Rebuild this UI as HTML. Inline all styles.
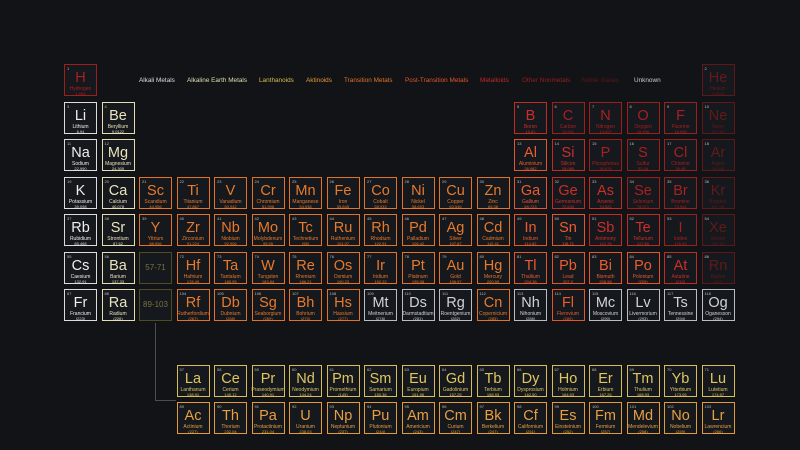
<!DOCTYPE html>
<html><head><meta charset="utf-8"><style>
html,body{margin:0;padding:0;background:#111317;width:800px;height:450px;overflow:hidden;font-family:"Liberation Sans",sans-serif}
.c{position:absolute;width:31px;height:30px;border:1.5px solid;background:#15181d;text-align:center;line-height:1}
.c i{position:absolute;left:2px;top:2px;font-style:normal;font-size:4px;color:#bbb}
.c b{position:absolute;left:0;right:0;top:6px;font-weight:normal;font-size:14.5px}
.c em{position:absolute;left:-2px;right:-2px;top:22px;font-style:normal;font-size:5px;white-space:nowrap}
.c small{position:absolute;left:0;right:0;top:27px;font-size:4px}
.a{border-color:#dcdcdc;color:#eee}.a small{color:#ddd}
.e{border-color:#e4ddb4;color:#ebe3bd}
.l{border-color:#d8bd55;color:#e0c660}
.x{border-color:#e29a35;color:#e8a040}
.t{border-color:#e07328;color:#e87a2c}
.p{border-color:#e5552a;color:#ec5c2e}
.m{border-color:#c22a24;color:#cc2e28}
.n{border-color:#9e1d1d;color:#a82020}
.g{border-color:#5e1818;color:#621a1a}
.u{border-color:#b8bcc4;color:#d0d2d8}
.ph{border-color:#4e4c24;color:#77723a}
.ph b{font-size:8px;top:11px}
.k1{left:64px}.k2{left:101.5px}.k3{left:139px}.k4{left:176.5px}.k5{left:214px}.k6{left:251.5px}.k7{left:289px}.k8{left:326.5px}.k9{left:364px}.k10{left:401.5px}.k11{left:439px}.k12{left:476.5px}.k13{left:514px}.k14{left:551.5px}.k15{left:589px}.k16{left:626.5px}.k17{left:664px}.k18{left:701.5px}
.r1{top:64px}.r2{top:101.5px}.r3{top:139px}.r4{top:176.5px}.r5{top:214px}.r6{top:251.5px}.r7{top:289px}.r8{top:364.5px}.r9{top:402px}
.lg{position:absolute;top:77px;font-size:6.4px;white-space:nowrap}
.ln{position:absolute;background:#4a4d52}
</style></head><body>
<span class="lg" style="left:139px;color:#ddd">Alkali Metals</span>
<span class="lg" style="left:187px;color:#e4ddb4">Alkaline Earth Metals</span>
<span class="lg" style="left:259px;color:#d8bd55">Lanthanoids</span>
<span class="lg" style="left:306px;color:#e29a35">Aktinoids</span>
<span class="lg" style="left:344px;color:#e07328">Transition Metals</span>
<span class="lg" style="left:405px;color:#e5552a">Post-Transition Metals</span>
<span class="lg" style="left:480px;color:#c22a24">Metalloids</span>
<span class="lg" style="left:522px;color:#9e1d1d">Other Nonmetals</span>
<span class="lg" style="left:582px;color:#5e1818">Noble Gases</span>
<span class="lg" style="left:634px;color:#ccc">Unknown</span>
<div class="ln" style="left:155px;top:323px;width:1px;height:78px"></div>
<div class="ln" style="left:155px;top:400px;width:21px;height:1px"></div>

<div class="c n k1 r1"><i>1</i><b>H</b><em>Hydrogen</em><small>1.008</small></div>
<div class="c g k18 r1"><i>2</i><b>He</b><em>Helium</em><small>4.0026</small></div>

<div class="c a k1 r2"><i>3</i><b>Li</b><em>Lithium</em><small>6.94</small></div>
<div class="c e k2 r2"><i>4</i><b>Be</b><em>Beryllium</em><small>9.0122</small></div>
<div class="c m k13 r2"><i>5</i><b>B</b><em>Boron</em><small>10.81</small></div>
<div class="c n k14 r2"><i>6</i><b>C</b><em>Carbon</em><small>12.011</small></div>
<div class="c n k15 r2"><i>7</i><b>N</b><em>Nitrogen</em><small>14.007</small></div>
<div class="c n k16 r2"><i>8</i><b>O</b><em>Oxygen</em><small>15.999</small></div>
<div class="c n k17 r2"><i>9</i><b>F</b><em>Fluorine</em><small>18.998</small></div>
<div class="c g k18 r2"><i>10</i><b>Ne</b><em>Neon</em><small>20.180</small></div>

<div class="c a k1 r3"><i>11</i><b>Na</b><em>Sodium</em><small>22.990</small></div>
<div class="c e k2 r3"><i>12</i><b>Mg</b><em>Magnesium</em><small>24.305</small></div>
<div class="c p k13 r3"><i>13</i><b>Al</b><em>Aluminium</em><small>26.982</small></div>
<div class="c m k14 r3"><i>14</i><b>Si</b><em>Silicon</em><small>28.085</small></div>
<div class="c n k15 r3"><i>15</i><b>P</b><em>Phosphorus</em><small>30.974</small></div>
<div class="c n k16 r3"><i>16</i><b>S</b><em>Sulfur</em><small>32.06</small></div>
<div class="c n k17 r3"><i>17</i><b>Cl</b><em>Chlorine</em><small>35.45</small></div>
<div class="c g k18 r3"><i>18</i><b>Ar</b><em>Argon</em><small>39.948</small></div>

<div class="c a k1 r4"><i>19</i><b>K</b><em>Potassium</em><small>39.098</small></div>
<div class="c e k2 r4"><i>20</i><b>Ca</b><em>Calcium</em><small>40.078</small></div>
<div class="c t k3 r4"><i>21</i><b>Sc</b><em>Scandium</em><small>44.956</small></div>
<div class="c t k4 r4"><i>22</i><b>Ti</b><em>Titanium</em><small>47.867</small></div>
<div class="c t k5 r4"><i>23</i><b>V</b><em>Vanadium</em><small>50.942</small></div>
<div class="c t k6 r4"><i>24</i><b>Cr</b><em>Chromium</em><small>51.996</small></div>
<div class="c t k7 r4"><i>25</i><b>Mn</b><em>Manganese</em><small>54.938</small></div>
<div class="c t k8 r4"><i>26</i><b>Fe</b><em>Iron</em><small>55.845</small></div>
<div class="c t k9 r4"><i>27</i><b>Co</b><em>Cobalt</em><small>58.933</small></div>
<div class="c t k10 r4"><i>28</i><b>Ni</b><em>Nickel</em><small>58.693</small></div>
<div class="c t k11 r4"><i>29</i><b>Cu</b><em>Copper</em><small>63.546</small></div>
<div class="c t k12 r4"><i>30</i><b>Zn</b><em>Zinc</em><small>65.38</small></div>
<div class="c p k13 r4"><i>31</i><b>Ga</b><em>Gallium</em><small>69.723</small></div>
<div class="c m k14 r4"><i>32</i><b>Ge</b><em>Germanium</em><small>72.630</small></div>
<div class="c m k15 r4"><i>33</i><b>As</b><em>Arsenic</em><small>74.922</small></div>
<div class="c n k16 r4"><i>34</i><b>Se</b><em>Selenium</em><small>78.971</small></div>
<div class="c n k17 r4"><i>35</i><b>Br</b><em>Bromine</em><small>79.904</small></div>
<div class="c g k18 r4"><i>36</i><b>Kr</b><em>Krypton</em><small>83.798</small></div>

<div class="c a k1 r5"><i>37</i><b>Rb</b><em>Rubidium</em><small>85.468</small></div>
<div class="c e k2 r5"><i>38</i><b>Sr</b><em>Strontium</em><small>87.62</small></div>
<div class="c t k3 r5"><i>39</i><b>Y</b><em>Yttrium</em><small>88.906</small></div>
<div class="c t k4 r5"><i>40</i><b>Zr</b><em>Zirconium</em><small>91.224</small></div>
<div class="c t k5 r5"><i>41</i><b>Nb</b><em>Niobium</em><small>92.906</small></div>
<div class="c t k6 r5"><i>42</i><b>Mo</b><em>Molybdenum</em><small>95.95</small></div>
<div class="c t k7 r5"><i>43</i><b>Tc</b><em>Technetium</em><small>(98)</small></div>
<div class="c t k8 r5"><i>44</i><b>Ru</b><em>Ruthenium</em><small>101.07</small></div>
<div class="c t k9 r5"><i>45</i><b>Rh</b><em>Rhodium</em><small>102.91</small></div>
<div class="c t k10 r5"><i>46</i><b>Pd</b><em>Palladium</em><small>106.42</small></div>
<div class="c t k11 r5"><i>47</i><b>Ag</b><em>Silver</em><small>107.87</small></div>
<div class="c t k12 r5"><i>48</i><b>Cd</b><em>Cadmium</em><small>112.41</small></div>
<div class="c p k13 r5"><i>49</i><b>In</b><em>Indium</em><small>114.82</small></div>
<div class="c p k14 r5"><i>50</i><b>Sn</b><em>Tin</em><small>118.71</small></div>
<div class="c m k15 r5"><i>51</i><b>Sb</b><em>Antimony</em><small>121.76</small></div>
<div class="c m k16 r5"><i>52</i><b>Te</b><em>Tellurium</em><small>127.60</small></div>
<div class="c n k17 r5"><i>53</i><b>I</b><em>Iodine</em><small>126.90</small></div>
<div class="c g k18 r5"><i>54</i><b>Xe</b><em>Xenon</em><small>131.29</small></div>

<div class="c a k1 r6"><i>55</i><b>Cs</b><em>Caesium</em><small>132.91</small></div>
<div class="c e k2 r6"><i>56</i><b>Ba</b><em>Barium</em><small>137.33</small></div>
<div class="c ph k3 r6"><b>57-71</b></div>
<div class="c t k4 r6"><i>72</i><b>Hf</b><em>Hafnium</em><small>178.49</small></div>
<div class="c t k5 r6"><i>73</i><b>Ta</b><em>Tantalum</em><small>180.95</small></div>
<div class="c t k6 r6"><i>74</i><b>W</b><em>Tungsten</em><small>183.84</small></div>
<div class="c t k7 r6"><i>75</i><b>Re</b><em>Rhenium</em><small>186.21</small></div>
<div class="c t k8 r6"><i>76</i><b>Os</b><em>Osmium</em><small>190.23</small></div>
<div class="c t k9 r6"><i>77</i><b>Ir</b><em>Iridium</em><small>192.22</small></div>
<div class="c t k10 r6"><i>78</i><b>Pt</b><em>Platinum</em><small>195.08</small></div>
<div class="c t k11 r6"><i>79</i><b>Au</b><em>Gold</em><small>196.97</small></div>
<div class="c t k12 r6"><i>80</i><b>Hg</b><em>Mercury</em><small>200.59</small></div>
<div class="c p k13 r6"><i>81</i><b>Tl</b><em>Thallium</em><small>204.38</small></div>
<div class="c p k14 r6"><i>82</i><b>Pb</b><em>Lead</em><small>207.2</small></div>
<div class="c p k15 r6"><i>83</i><b>Bi</b><em>Bismuth</em><small>208.98</small></div>
<div class="c p k16 r6"><i>84</i><b>Po</b><em>Polonium</em><small>(209)</small></div>
<div class="c m k17 r6"><i>85</i><b>At</b><em>Astatine</em><small>(210)</small></div>
<div class="c g k18 r6"><i>86</i><b>Rn</b><em>Radon</em><small>(222)</small></div>

<div class="c a k1 r7"><i>87</i><b>Fr</b><em>Francium</em><small>(223)</small></div>
<div class="c e k2 r7"><i>88</i><b>Ra</b><em>Radium</em><small>(226)</small></div>
<div class="c ph k3 r7"><b>89-103</b></div>
<div class="c t k4 r7"><i>104</i><b>Rf</b><em>Rutherfordium</em><small>(267)</small></div>
<div class="c t k5 r7"><i>105</i><b>Db</b><em>Dubnium</em><small>(268)</small></div>
<div class="c t k6 r7"><i>106</i><b>Sg</b><em>Seaborgium</em><small>(269)</small></div>
<div class="c t k7 r7"><i>107</i><b>Bh</b><em>Bohrium</em><small>(270)</small></div>
<div class="c t k8 r7"><i>108</i><b>Hs</b><em>Hassium</em><small>(277)</small></div>
<div class="c u k9 r7"><i>109</i><b>Mt</b><em>Meitnerium</em><small>(278)</small></div>
<div class="c u k10 r7"><i>110</i><b>Ds</b><em>Darmstadtium</em><small>(281)</small></div>
<div class="c u k11 r7"><i>111</i><b>Rg</b><em>Roentgenium</em><small>(282)</small></div>
<div class="c t k12 r7"><i>112</i><b>Cn</b><em>Copernicium</em><small>(285)</small></div>
<div class="c u k13 r7"><i>113</i><b>Nh</b><em>Nihonium</em><small>(286)</small></div>
<div class="c p k14 r7"><i>114</i><b>Fl</b><em>Flerovium</em><small>(289)</small></div>
<div class="c u k15 r7"><i>115</i><b>Mc</b><em>Moscovium</em><small>(290)</small></div>
<div class="c u k16 r7"><i>116</i><b>Lv</b><em>Livermorium</em><small>(293)</small></div>
<div class="c u k17 r7"><i>117</i><b>Ts</b><em>Tennessine</em><small>(294)</small></div>
<div class="c u k18 r7"><i>118</i><b>Og</b><em>Oganesson</em><small>(294)</small></div>

<div class="c l k4 r8"><i>57</i><b>La</b><em>Lanthanum</em><small>138.91</small></div>
<div class="c l k5 r8"><i>58</i><b>Ce</b><em>Cerium</em><small>140.12</small></div>
<div class="c l k6 r8"><i>59</i><b>Pr</b><em>Praseodymium</em><small>140.91</small></div>
<div class="c l k7 r8"><i>60</i><b>Nd</b><em>Neodymium</em><small>144.24</small></div>
<div class="c l k8 r8"><i>61</i><b>Pm</b><em>Promethium</em><small>(145)</small></div>
<div class="c l k9 r8"><i>62</i><b>Sm</b><em>Samarium</em><small>150.36</small></div>
<div class="c l k10 r8"><i>63</i><b>Eu</b><em>Europium</em><small>151.96</small></div>
<div class="c l k11 r8"><i>64</i><b>Gd</b><em>Gadolinium</em><small>157.25</small></div>
<div class="c l k12 r8"><i>65</i><b>Tb</b><em>Terbium</em><small>158.93</small></div>
<div class="c l k13 r8"><i>66</i><b>Dy</b><em>Dysprosium</em><small>162.50</small></div>
<div class="c l k14 r8"><i>67</i><b>Ho</b><em>Holmium</em><small>164.93</small></div>
<div class="c l k15 r8"><i>68</i><b>Er</b><em>Erbium</em><small>167.26</small></div>
<div class="c l k16 r8"><i>69</i><b>Tm</b><em>Thulium</em><small>168.93</small></div>
<div class="c l k17 r8"><i>70</i><b>Yb</b><em>Ytterbium</em><small>173.05</small></div>
<div class="c l k18 r8"><i>71</i><b>Lu</b><em>Lutetium</em><small>174.97</small></div>

<div class="c x k4 r9"><i>89</i><b>Ac</b><em>Actinium</em><small>(227)</small></div>
<div class="c x k5 r9"><i>90</i><b>Th</b><em>Thorium</em><small>232.04</small></div>
<div class="c x k6 r9"><i>91</i><b>Pa</b><em>Protactinium</em><small>231.04</small></div>
<div class="c x k7 r9"><i>92</i><b>U</b><em>Uranium</em><small>238.03</small></div>
<div class="c x k8 r9"><i>93</i><b>Np</b><em>Neptunium</em><small>(237)</small></div>
<div class="c x k9 r9"><i>94</i><b>Pu</b><em>Plutonium</em><small>(244)</small></div>
<div class="c x k10 r9"><i>95</i><b>Am</b><em>Americium</em><small>(243)</small></div>
<div class="c x k11 r9"><i>96</i><b>Cm</b><em>Curium</em><small>(247)</small></div>
<div class="c x k12 r9"><i>97</i><b>Bk</b><em>Berkelium</em><small>(247)</small></div>
<div class="c x k13 r9"><i>98</i><b>Cf</b><em>Californium</em><small>(251)</small></div>
<div class="c x k14 r9"><i>99</i><b>Es</b><em>Einsteinium</em><small>(252)</small></div>
<div class="c x k15 r9"><i>100</i><b>Fm</b><em>Fermium</em><small>(257)</small></div>
<div class="c x k16 r9"><i>101</i><b>Md</b><em>Mendelevium</em><small>(258)</small></div>
<div class="c x k17 r9"><i>102</i><b>No</b><em>Nobelium</em><small>(259)</small></div>
<div class="c x k18 r9"><i>103</i><b>Lr</b><em>Lawrencium</em><small>(266)</small></div>
</body></html>
